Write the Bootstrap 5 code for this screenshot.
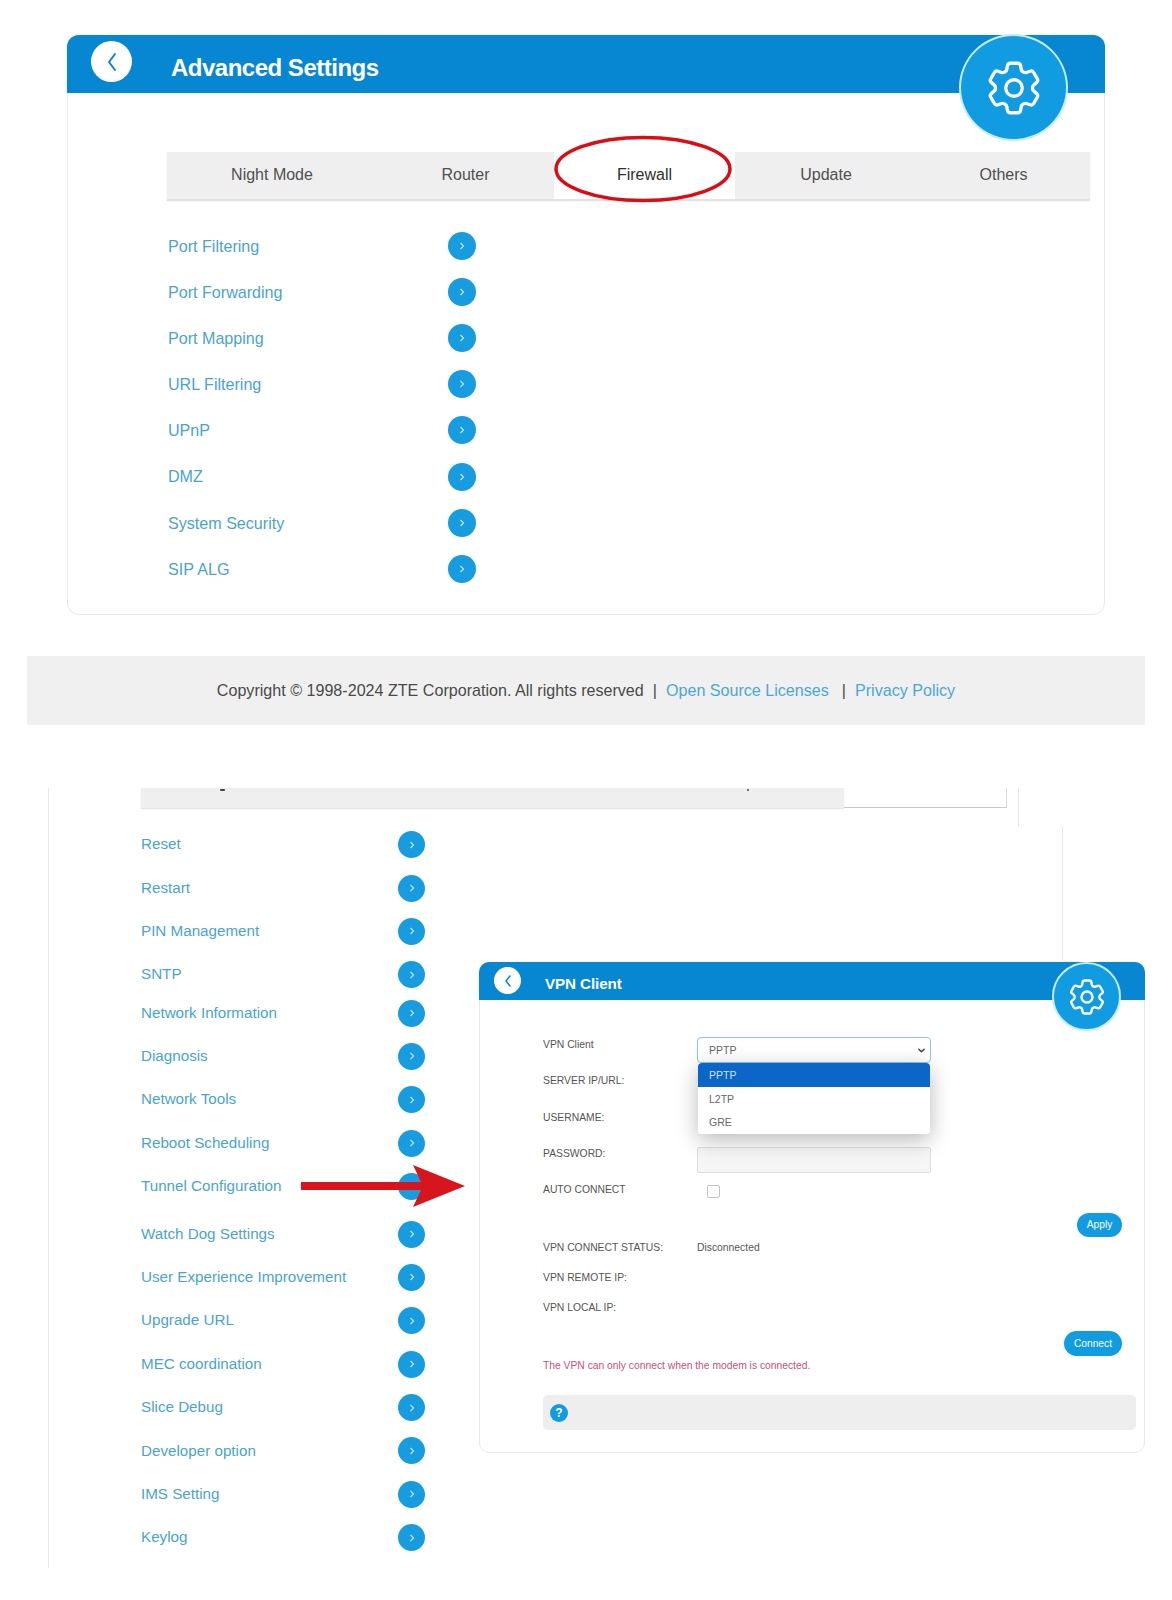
<!DOCTYPE html>
<html lang="en">
<head>
<meta charset="utf-8">
<title>Advanced Settings</title>
<link rel="stylesheet" href="https://cdn.jsdelivr.net/npm/bootstrap@5.3.0/dist/css/bootstrap.min.css">
<style>
body{background:#fff;font-family:"Liberation Sans",Arial,sans-serif;width:1172px;height:1600px;overflow:hidden;color:#444}
.panel-main{margin:35px 0 0 67px;width:1038px;height:580px;border:1px solid #e8e8e8;border-radius:12px;position:relative}
.panel-head{background:#0787d1;height:58px;border-radius:12px 12px 0 0;margin:-1px -1px 0;box-shadow:0 0 1px #7fdcf5}
.back-disc{background:#fff;border-radius:50%;color:#0787d1}
.back-lg{width:41px;height:41px;margin:6px 0 0 24px}
.title-lg{font-size:24px;font-weight:700;color:#fff;margin-left:39px;padding-top:7px;letter-spacing:-.5px}
.gear-disc{position:absolute;background:#119be1;border-radius:50%;border:2px solid #c4ecfa;color:#fff}
.gear-lg{width:109px;height:107px;left:891px;top:-2px}
.gear-sm{width:69px;height:69px;left:572px;top:-1px}
.tab-strip{margin:59px 14px 0 99px;height:47px;background:#efefef;box-shadow:0 2px 1px #e2e2e2}
.tab-strip .nav-link{color:#505050;font-size:16px;padding:0;height:47px;line-height:46px;text-align:center}
.tab-strip .nav-link:nth-child(1){width:210px}
.tab-strip .nav-link:nth-child(2){width:177px}
.tab-strip .nav-link:nth-child(3){width:181px;background:#fff;color:#2f2f2f}
.tab-strip .nav-link:nth-child(4){width:182px}
.tab-strip .nav-link:nth-child(5){width:173px}
.callout-ring{position:absolute;left:485px;top:99px}
.menu-list{margin:24px 0 0 100px}
.menu-row{display:flex;align-items:center;height:46.1px}
.menu-text{width:280px;color:#4aa4d0;font-size:16.1px}
.go-disc{width:28px;height:28px;background:#189ce0;border-radius:50%;color:#bfe6f7;flex:none}
.legal-bar{margin:41px 0 0 27px;width:1118px;height:69px;background:#f0f0f0;font-size:16.1px;color:#4a4a4a}
.legal-bar a{color:#4aa8d6;text-decoration:none}
.legal-bar .sep{margin:0 9px}
.legal-bar .sep-wide{margin-left:13px}
.shot-lower{margin:63px 0 0 48px;width:1097px;height:780px;border-left:1px solid #e8e8e8;position:relative}
.cut-bar{margin-left:92px;width:866px;height:20px}
.cut-grey{width:703px;background:#efefef;box-shadow:0 1px 1px #e6e6e6;position:relative}
.cut-tab{width:163px;border-bottom:1px solid #c9c9c9;border-right:1px solid #dcdcdc}
.crumb{position:absolute;background:#444;height:2px;top:1px;border-radius:1px}
.edge-line{position:absolute;width:1px;background:#e6e6e6}
.lower-list{margin-left:92px;width:284px;padding-top:15px;flex:none}
.lower-row{display:flex;align-items:center;height:43.4px}
.lower-row.tight{margin-top:-5.2px}
.lower-row.loose{margin-top:4px}
.lower-row .menu-text{width:257px;font-size:15.2px}
.lower-row .go-disc{width:27px;height:27px}
.vpn-panel{margin:154px 0 0 54px;width:667px;height:491px;border:1px solid #e8e8e8;border-radius:10px;position:relative;font-size:10.35px;color:#555}
.vpn-head{background:#0787d1;height:38px;margin:-1px -1px 0;border-radius:10px 10px 0 0}
.back-sm{width:27px;height:27px;margin-top:5px;margin-left:15px}
.title-sm{font-size:15.2px;font-weight:700;color:#fff;margin-left:24px;padding-top:6px;letter-spacing:-.1px}
.vpn-form{padding:25px 0 0 63px}
.vpn-line{display:flex;height:36.3px;line-height:40px;align-items:flex-start}
.vpn-key{width:154px;flex:none}
.vpn-ctl{position:relative;width:234px}
.vpn-ctl .form-select{height:26px;margin-top:12px;padding:0 20px 0 11px;font-size:10.5px;color:#666;border-color:#8cc6e8;border-radius:4px;line-height:24px;background-size:9px 7px;background-position:right 4px center;background-image:url("data:image/svg+xml,%3csvg xmlns='http://www.w3.org/2000/svg' viewBox='0 0 16 16'%3e%3cpath fill='none' stroke='%23444' stroke-linecap='round' stroke-linejoin='round' stroke-width='3.5' d='m2 5 6 6 6-6'/%3e%3c/svg%3e")}
.vpn-drop{position:absolute;left:1px;right:1px;top:38px;z-index:3;border-radius:4px;box-shadow:0 6px 22px rgba(0,0,0,.28);font-size:10.5px}
.vpn-drop .list-group-item{padding:1px 11px 0;height:23.5px;line-height:23.5px;border:0;color:#666;background:#fff}
.vpn-drop .list-group-item.active{background:#0b66c8;color:#cfe4fb}
.vpn-ctl .form-control{height:26px;margin-top:13px;background:#f6f6f6;border-color:#dedede;border-radius:2px}
.vpn-tick{width:13px;height:13px;margin:15px 0 0 10px;border:1px solid #c4c4c4;border-radius:2px;background:#fff;display:block}
.pill-end{display:flex;justify-content:flex-end;padding-right:22px}
.pill-gap{margin-top:7px}
.pill-btn{background:#119be1;color:#fff;border:0;border-radius:13px;font-size:10.2px;padding:0;height:24px;line-height:22px}
.pill-apply{width:45px}
.pill-connect{width:58px;height:25px;margin-top:8px}
.vpn-status{height:30px;line-height:30px;padding-left:63px;display:flex}
.vpn-status.first{margin-top:-4px}
.vpn-warn{padding-left:63px;height:20px;line-height:20px;color:#c8507c;font-size:10.3px}
.vpn-help{margin:19px 8px 0 63px;height:35px;background:#eeeeee;border-radius:5px}
.help-dot{width:18px;height:18px;border-radius:50%;background:#119be1;color:#fff;font-size:12px;font-weight:700;margin-left:7px;line-height:18px;text-align:center}
.red-arrow{position:absolute;left:251px;top:375px}
</style>
</head>
<body>

<section class="panel-main">
  <div class="panel-head d-flex align-items-start">
    <div class="back-disc back-lg d-flex align-items-center justify-content-center">
      <svg width="14" height="20" viewBox="0 0 14 20" fill="none" stroke="currentColor" stroke-width="2" stroke-linecap="round" stroke-linejoin="round"><path d="M10 2 4 10l6 8"/></svg>
    </div>
    <div class="title-lg align-self-center">Advanced Settings</div>
  </div>
  <div class="gear-disc gear-lg d-flex align-items-center justify-content-center">
    <svg width="66" height="66" viewBox="0 0 24 24" fill="none" stroke="currentColor" stroke-width="1.200" stroke-linejoin="round"><path d="M9.594 3.94c.09-.542.56-.94 1.11-.94h2.593c.55 0 1.02.398 1.11.94l.213 1.281c.063.374.313.686.645.87.074.04.147.083.22.127.325.196.72.257 1.075.124l1.217-.456a1.125 1.125 0 0 1 1.37.49l1.296 2.247a1.125 1.125 0 0 1-.26 1.431l-1.003.827c-.293.241-.438.613-.43.992a7.723 7.723 0 0 1 0 .255c-.008.378.137.75.43.991l1.004.827c.424.35.534.955.26 1.43l-1.298 2.247a1.125 1.125 0 0 1-1.369.491l-1.217-.456c-.355-.133-.75-.072-1.076.124a6.47 6.47 0 0 1-.22.128c-.331.183-.581.495-.644.869l-.213 1.281c-.09.543-.56.94-1.11.94h-2.594c-.55 0-1.019-.398-1.11-.94l-.213-1.281c-.062-.374-.312-.686-.644-.87a6.52 6.52 0 0 1-.22-.127c-.325-.196-.72-.257-1.076-.124l-1.217.456a1.125 1.125 0 0 1-1.369-.49l-1.297-2.247a1.125 1.125 0 0 1 .26-1.431l1.004-.827c.292-.24.437-.613.43-.991a6.932 6.932 0 0 1 0-.255c.007-.38-.138-.751-.43-.992l-1.004-.827a1.125 1.125 0 0 1-.26-1.43l1.297-2.247a1.125 1.125 0 0 1 1.37-.491l1.216.456c.356.133.751.072 1.076-.124.072-.044.146-.086.22-.128.332-.183.582-.495.644-.869l.214-1.28Z"/><circle cx="12" cy="12" r="3"/></svg>
  </div>
  <nav class="nav tab-strip flex-nowrap">
    <a class="nav-link" href="#">Night Mode</a>
    <a class="nav-link" href="#">Router</a>
    <a class="nav-link" href="#">Firewall</a>
    <a class="nav-link" href="#">Update</a>
    <a class="nav-link" href="#">Others</a>
  </nav>
  <svg class="callout-ring" width="180" height="70" viewBox="0 0 180 70" fill="none"><ellipse cx="90" cy="34" rx="87" ry="31.500" stroke="#dc0b14" stroke-width="3.500"/></svg>
  <div class="menu-list">
    <div class="menu-row"><span class="menu-text">Port Filtering</span><span class="go-disc d-flex align-items-center justify-content-center"><svg width="8" height="10" viewBox="0 0 8 10" fill="none" stroke="currentColor" stroke-width="1.200"><path d="m2.500 2 3 3-3 3"/></svg></span></div>
    <div class="menu-row"><span class="menu-text">Port Forwarding</span><span class="go-disc d-flex align-items-center justify-content-center"><svg width="8" height="10" viewBox="0 0 8 10" fill="none" stroke="currentColor" stroke-width="1.200"><path d="m2.500 2 3 3-3 3"/></svg></span></div>
    <div class="menu-row"><span class="menu-text">Port Mapping</span><span class="go-disc d-flex align-items-center justify-content-center"><svg width="8" height="10" viewBox="0 0 8 10" fill="none" stroke="currentColor" stroke-width="1.200"><path d="m2.500 2 3 3-3 3"/></svg></span></div>
    <div class="menu-row"><span class="menu-text">URL Filtering</span><span class="go-disc d-flex align-items-center justify-content-center"><svg width="8" height="10" viewBox="0 0 8 10" fill="none" stroke="currentColor" stroke-width="1.200"><path d="m2.500 2 3 3-3 3"/></svg></span></div>
    <div class="menu-row"><span class="menu-text">UPnP</span><span class="go-disc d-flex align-items-center justify-content-center"><svg width="8" height="10" viewBox="0 0 8 10" fill="none" stroke="currentColor" stroke-width="1.200"><path d="m2.500 2 3 3-3 3"/></svg></span></div>
    <div class="menu-row"><span class="menu-text">DMZ</span><span class="go-disc d-flex align-items-center justify-content-center"><svg width="8" height="10" viewBox="0 0 8 10" fill="none" stroke="currentColor" stroke-width="1.200"><path d="m2.500 2 3 3-3 3"/></svg></span></div>
    <div class="menu-row"><span class="menu-text">System Security</span><span class="go-disc d-flex align-items-center justify-content-center"><svg width="8" height="10" viewBox="0 0 8 10" fill="none" stroke="currentColor" stroke-width="1.200"><path d="m2.500 2 3 3-3 3"/></svg></span></div>
    <div class="menu-row"><span class="menu-text">SIP ALG</span><span class="go-disc d-flex align-items-center justify-content-center"><svg width="8" height="10" viewBox="0 0 8 10" fill="none" stroke="currentColor" stroke-width="1.200"><path d="m2.500 2 3 3-3 3"/></svg></span></div>
  </div>
</section>

<footer class="legal-bar d-flex align-items-center justify-content-center">
  <span>Copyright © 1998-2024 ZTE Corporation. All rights reserved</span><span class="sep">|</span><a href="#">Open Source Licenses</a><span class="sep sep-wide">|</span><a href="#">Privacy Policy</a>
</footer>

<section class="shot-lower">
  <div class="cut-bar d-flex">
    <div class="cut-grey"><i class="crumb" style="left:79px;width:5px"></i><i class="crumb" style="left:606px;width:2px"></i></div>
    <div class="cut-tab"></div>
  </div>
  <i class="edge-line" style="left:969px;top:0;height:39px"></i>
  <i class="edge-line" style="left:1013px;top:39px;height:133px"></i>
  <div class="d-flex">
    <div class="lower-list">
      <div class="lower-row"><span class="menu-text">Reset</span><span class="go-disc d-flex align-items-center justify-content-center"><svg width="8" height="10" viewBox="0 0 8 10" fill="none" stroke="currentColor" stroke-width="1.200"><path d="m2.500 2 3 3-3 3"/></svg></span></div>
      <div class="lower-row"><span class="menu-text">Restart</span><span class="go-disc d-flex align-items-center justify-content-center"><svg width="8" height="10" viewBox="0 0 8 10" fill="none" stroke="currentColor" stroke-width="1.200"><path d="m2.500 2 3 3-3 3"/></svg></span></div>
      <div class="lower-row"><span class="menu-text">PIN Management</span><span class="go-disc d-flex align-items-center justify-content-center"><svg width="8" height="10" viewBox="0 0 8 10" fill="none" stroke="currentColor" stroke-width="1.200"><path d="m2.500 2 3 3-3 3"/></svg></span></div>
      <div class="lower-row"><span class="menu-text">SNTP</span><span class="go-disc d-flex align-items-center justify-content-center"><svg width="8" height="10" viewBox="0 0 8 10" fill="none" stroke="currentColor" stroke-width="1.200"><path d="m2.500 2 3 3-3 3"/></svg></span></div>
      <div class="lower-row tight"><span class="menu-text">Network Information</span><span class="go-disc d-flex align-items-center justify-content-center"><svg width="8" height="10" viewBox="0 0 8 10" fill="none" stroke="currentColor" stroke-width="1.200"><path d="m2.500 2 3 3-3 3"/></svg></span></div>
      <div class="lower-row"><span class="menu-text">Diagnosis</span><span class="go-disc d-flex align-items-center justify-content-center"><svg width="8" height="10" viewBox="0 0 8 10" fill="none" stroke="currentColor" stroke-width="1.200"><path d="m2.500 2 3 3-3 3"/></svg></span></div>
      <div class="lower-row"><span class="menu-text">Network Tools</span><span class="go-disc d-flex align-items-center justify-content-center"><svg width="8" height="10" viewBox="0 0 8 10" fill="none" stroke="currentColor" stroke-width="1.200"><path d="m2.500 2 3 3-3 3"/></svg></span></div>
      <div class="lower-row"><span class="menu-text">Reboot Scheduling</span><span class="go-disc d-flex align-items-center justify-content-center"><svg width="8" height="10" viewBox="0 0 8 10" fill="none" stroke="currentColor" stroke-width="1.200"><path d="m2.500 2 3 3-3 3"/></svg></span></div>
      <div class="lower-row"><span class="menu-text">Tunnel Configuration</span><span class="go-disc d-flex align-items-center justify-content-center"></span></div>
      <div class="lower-row loose"><span class="menu-text">Watch Dog Settings</span><span class="go-disc d-flex align-items-center justify-content-center"><svg width="8" height="10" viewBox="0 0 8 10" fill="none" stroke="currentColor" stroke-width="1.200"><path d="m2.500 2 3 3-3 3"/></svg></span></div>
      <div class="lower-row"><span class="menu-text">User Experience Improvement</span><span class="go-disc d-flex align-items-center justify-content-center"><svg width="8" height="10" viewBox="0 0 8 10" fill="none" stroke="currentColor" stroke-width="1.200"><path d="m2.500 2 3 3-3 3"/></svg></span></div>
      <div class="lower-row"><span class="menu-text">Upgrade URL</span><span class="go-disc d-flex align-items-center justify-content-center"><svg width="8" height="10" viewBox="0 0 8 10" fill="none" stroke="currentColor" stroke-width="1.200"><path d="m2.500 2 3 3-3 3"/></svg></span></div>
      <div class="lower-row"><span class="menu-text">MEC coordination</span><span class="go-disc d-flex align-items-center justify-content-center"><svg width="8" height="10" viewBox="0 0 8 10" fill="none" stroke="currentColor" stroke-width="1.200"><path d="m2.500 2 3 3-3 3"/></svg></span></div>
      <div class="lower-row"><span class="menu-text">Slice Debug</span><span class="go-disc d-flex align-items-center justify-content-center"><svg width="8" height="10" viewBox="0 0 8 10" fill="none" stroke="currentColor" stroke-width="1.200"><path d="m2.500 2 3 3-3 3"/></svg></span></div>
      <div class="lower-row"><span class="menu-text">Developer option</span><span class="go-disc d-flex align-items-center justify-content-center"><svg width="8" height="10" viewBox="0 0 8 10" fill="none" stroke="currentColor" stroke-width="1.200"><path d="m2.500 2 3 3-3 3"/></svg></span></div>
      <div class="lower-row"><span class="menu-text">IMS Setting</span><span class="go-disc d-flex align-items-center justify-content-center"><svg width="8" height="10" viewBox="0 0 8 10" fill="none" stroke="currentColor" stroke-width="1.200"><path d="m2.500 2 3 3-3 3"/></svg></span></div>
      <div class="lower-row"><span class="menu-text">Keylog</span><span class="go-disc d-flex align-items-center justify-content-center"><svg width="8" height="10" viewBox="0 0 8 10" fill="none" stroke="currentColor" stroke-width="1.200"><path d="m2.500 2 3 3-3 3"/></svg></span></div>
    </div>

    <div class="vpn-panel">
      <div class="vpn-head d-flex align-items-start">
        <div class="back-disc back-sm d-flex align-items-center justify-content-center">
          <svg width="10" height="14" viewBox="0 0 10 14" fill="none" stroke="currentColor" stroke-width="1.500" stroke-linecap="round" stroke-linejoin="round"><path d="M7 2 3 7l4 5"/></svg>
        </div>
        <div class="title-sm align-self-center">VPN Client</div>
      </div>
      <div class="gear-disc gear-sm d-flex align-items-center justify-content-center">
        <svg width="44" height="44" viewBox="0 0 24 24" fill="none" stroke="currentColor" stroke-width="1.300" stroke-linejoin="round"><path d="M9.594 3.94c.09-.542.56-.94 1.11-.94h2.593c.55 0 1.02.398 1.11.94l.213 1.281c.063.374.313.686.645.87.074.04.147.083.22.127.325.196.72.257 1.075.124l1.217-.456a1.125 1.125 0 0 1 1.37.49l1.296 2.247a1.125 1.125 0 0 1-.26 1.431l-1.003.827c-.293.241-.438.613-.43.992a7.723 7.723 0 0 1 0 .255c-.008.378.137.75.43.991l1.004.827c.424.35.534.955.26 1.43l-1.298 2.247a1.125 1.125 0 0 1-1.369.491l-1.217-.456c-.355-.133-.75-.072-1.076.124a6.47 6.47 0 0 1-.22.128c-.331.183-.581.495-.644.869l-.213 1.281c-.09.543-.56.94-1.11.94h-2.594c-.55 0-1.019-.398-1.11-.94l-.213-1.281c-.062-.374-.312-.686-.644-.87a6.52 6.52 0 0 1-.22-.127c-.325-.196-.72-.257-1.076-.124l-1.217.456a1.125 1.125 0 0 1-1.369-.49l-1.297-2.247a1.125 1.125 0 0 1 .26-1.431l1.004-.827c.292-.24.437-.613.43-.991a6.932 6.932 0 0 1 0-.255c.007-.38-.138-.751-.43-.992l-1.004-.827a1.125 1.125 0 0 1-.26-1.43l1.297-2.247a1.125 1.125 0 0 1 1.37-.491l1.216.456c.356.133.751.072 1.076-.124.072-.044.146-.086.22-.128.332-.183.582-.495.644-.869l.214-1.28Z"/><circle cx="12" cy="12" r="3"/></svg>
      </div>
      <div class="vpn-form">
        <div class="vpn-line">
          <span class="vpn-key">VPN Client</span>
          <div class="vpn-ctl">
            <select class="form-select" aria-label="VPN Client"><option>PPTP</option><option>L2TP</option><option>GRE</option></select>
            <div class="list-group vpn-drop">
              <div class="list-group-item active">PPTP</div>
              <div class="list-group-item">L2TP</div>
              <div class="list-group-item">GRE</div>
            </div>
          </div>
        </div>
        <div class="vpn-line"><span class="vpn-key">SERVER IP/URL:</span></div>
        <div class="vpn-line"><span class="vpn-key">USERNAME:</span></div>
        <div class="vpn-line"><span class="vpn-key">PASSWORD:</span><div class="vpn-ctl"><input class="form-control" type="password" aria-label="Password"></div></div>
        <div class="vpn-line"><span class="vpn-key">AUTO CONNECT</span><i class="vpn-tick"></i></div>
      </div>
      <div class="pill-end pill-gap"><button class="btn pill-btn pill-apply" type="button">Apply</button></div>
      <div class="vpn-status first"><span class="vpn-key">VPN CONNECT STATUS:</span><span>Disconnected</span></div>
      <div class="vpn-status"><span class="vpn-key">VPN REMOTE IP:</span></div>
      <div class="vpn-status"><span class="vpn-key">VPN LOCAL IP:</span></div>
      <div class="pill-end"><button class="btn pill-btn pill-connect" type="button">Connect</button></div>
      <div class="vpn-warn">The VPN can only connect when the modem is connected.</div>
      <div class="vpn-help d-flex align-items-center"><span class="help-dot">?</span></div>
    </div>
  </div>
  <svg class="red-arrow" width="170" height="46" viewBox="0 0 170 46"><path d="M1 19h120L113 2l52 21-52 21 8-17H1z" fill="#d8141c"/></svg>
</section>

</body>
</html>
